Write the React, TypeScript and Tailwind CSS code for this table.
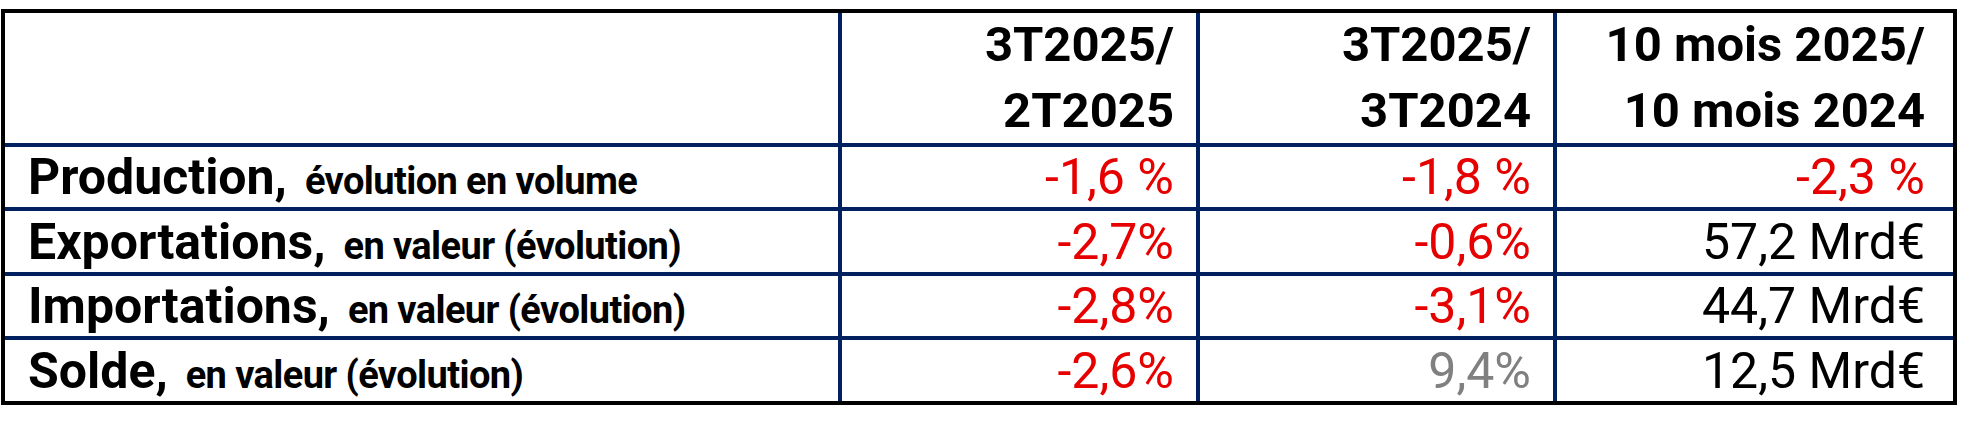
import React from 'react';

const rows = [
  { title: 'Production,', sub: 'évolution en volume', a: '-1,6 %', b: '-1,8 %', c: '-2,3 %', bGray: false, cRed: true },
  { title: 'Exportations,', sub: 'en valeur (évolution)', a: '-2,7%', b: '-0,6%', c: '57,2 Mrd€', bGray: false, cRed: false },
  { title: 'Importations,', sub: 'en valeur (évolution)', a: '-2,8%', b: '-3,1%', c: '44,7 Mrd€', bGray: false, cRed: false },
  { title: 'Solde,', sub: 'en valeur (évolution)', a: '-2,6%', b: '9,4%', c: '12,5 Mrd€', bGray: true, cRed: false },
];

export default function App() {
  return (
    <div className="w-[1964px] h-[434px] bg-white" style={{ fontFamily: 'Roboto, "Liberation Sans", sans-serif' }}>
      <div className="ml-[1px] mt-[9px] w-[1956px] border-4 border-black bg-[#002060] grid grid-cols-[833px_354px_353px_396px] grid-rows-[130px_60px_61px_60px_61px] gap-[4px]">
        {/* Header */}
        <div className="bg-white" />
        <div className="bg-white flex flex-col items-end justify-center pr-[22px] text-[49px] font-bold leading-[66px] text-black">
          <span>3T2025/</span>
          <span>2T2025</span>
        </div>
        <div className="bg-white flex flex-col items-end justify-center pr-[22px] text-[49px] font-bold leading-[66px] text-black">
          <span>3T2025/</span>
          <span>3T2024</span>
        </div>
        <div className="bg-white flex flex-col items-end justify-center pr-[28px] text-[49px] font-bold leading-[66px] text-black">
          <span>10 mois 2025/</span>
          <span>10 mois 2024</span>
        </div>

        {rows.map(r => (
          <React.Fragment key={r.title}>
            <div className="bg-white flex items-center pl-[23px] text-black whitespace-nowrap">
              <div className="flex items-baseline">
                <span className="text-[50px] font-bold leading-none">{r.title}</span>
                <span className="ml-[18px] text-[38px] font-bold leading-none tracking-[-0.6px]">{r.sub}</span>
              </div>
            </div>
            <div className="bg-white flex items-center justify-end pr-[22px] text-[50px] leading-none text-[#e60000]">
              {r.a}
            </div>
            <div className={`bg-white flex items-center justify-end pr-[22px] text-[50px] leading-none ${r.bGray ? 'text-[#808080]' : 'text-[#e60000]'}`}>
              {r.b}
            </div>
            <div className={`bg-white flex items-center justify-end pr-[28px] text-[50px] leading-none ${r.cRed ? 'text-[#e60000]' : 'text-black'}`}>
              {r.c}
            </div>
          </React.Fragment>
        ))}
      </div>
    </div>
  );
}
